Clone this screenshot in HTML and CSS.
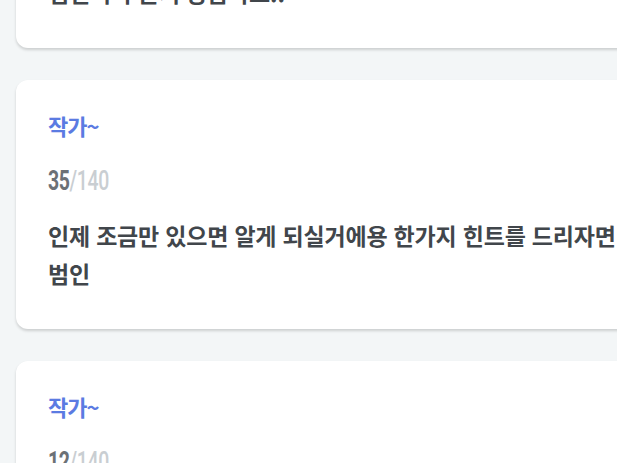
FILE: index.html
```html
<!DOCTYPE html>
<html lang="ko">
<head>
<meta charset="utf-8">
<link rel="stylesheet" href="styles.css">
</head>
<body>
<div class="feed">
  <div class="card">
    <div class="author">작가~</div>
    <div class="count"><span class="cur">27</span><span class="max">/140</span></div>
    <p class="msg">범인이 누군지 궁금하죠..</p>
  </div>
  <div class="card">
    <div class="author">작가~</div>
    <div class="count"><span class="cur">35</span><span class="max">/140</span></div>
    <p class="msg">인제 조금만 있으면 알게 되실거에용 한가지 힌트를 드리자면 범인</p>
  </div>
  <div class="card">
    <div class="author">작가~</div>
    <div class="count"><span class="cur">12</span><span class="max">/140</span></div>
    <p class="msg">조금만 기다려 주세요</p>
  </div>
</div>
</body>
</html>
```
FILE: styles.css
```css
html, body {
  margin: 0;
  padding: 0;
}
body {
  background: #f3f6f7;
  overflow: hidden;
  width: 617px;
  height: 463px;
  font-family: "Noto Sans CJK KR", "Noto Sans", sans-serif;
}
.feed {
  display: flex;
  flex-direction: column;
  gap: 32px;
  margin-top: -163px;
  padding-left: 16px;
  width: 680px;
}
.card {
  background: #ffffff;
  border-radius: 12px;
  box-shadow: 0 2px 3px rgba(0, 0, 0, 0.16);
  padding: 30px 32px 37px 32px;
}
.author {
  color: #5b7be2;
  font-size: 22px;
  font-weight: 700;
  line-height: 30px;
  letter-spacing: -1px;
}
.count {
  margin-top: 27px;
  font-family: "Roboto", "Noto Sans", sans-serif;
  font-size: 27px;
  font-weight: 700;
  line-height: 28px;
  transform: scaleX(0.72);
  transform-origin: left center;
  letter-spacing: -0.5px;
}
.cur { color: #6c7176; }
.max { color: #c9ced2; font-weight: 500; }
.msg {
  margin: 21px 0 0 0;
  width: 572px;
  color: #41464b;
  font-size: 23px;
  font-weight: 700;
  line-height: 38px;
  letter-spacing: -0.2px;
}
```
